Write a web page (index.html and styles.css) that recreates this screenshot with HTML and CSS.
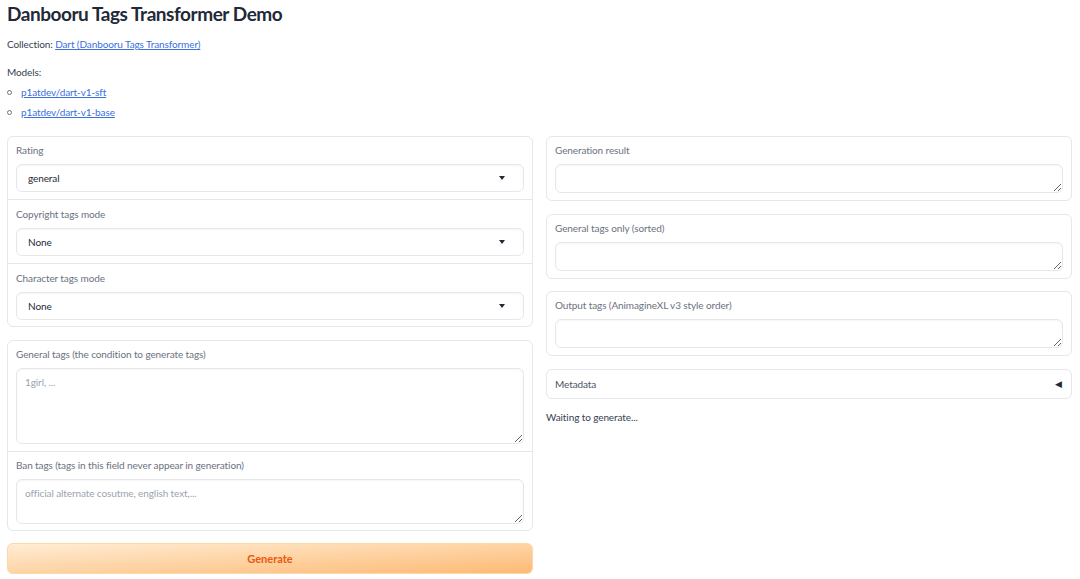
FILE: index.html
```html
<!DOCTYPE html>
<html lang="en">
<head>
<meta charset="UTF-8" />
<meta name="viewport" content="width=device-width, initial-scale=1" />
<title>Danbooru Tags Transformer Demo</title>
<link rel="stylesheet" href="styles.css">
</head>
<body>

<div class="app">
  <h1>Danbooru Tags Transformer Demo</h1>
  <p class="intro">Collection: <a href="#">Dart (Danbooru Tags Transformer)</a></p>
  <p class="intro models">Models:</p>
  <ul class="model-list">
    <li><a href="#">p1atdev/dart-v1-sft</a></li>
    <li><a href="#">p1atdev/dart-v1-base</a></li>
  </ul>

  <div class="row">
    <!-- left: inputs -->
    <div class="col">
      <div class="panel selects">
        <div class="block">
          <label class="field-label">Rating</label>
          <div class="dropdown"><span>general</span><span class="caret"></span></div>
        </div>
        <div class="block">
          <label class="field-label">Copyright tags mode</label>
          <div class="dropdown"><span>None</span><span class="caret"></span></div>
        </div>
        <div class="block">
          <label class="field-label">Character tags mode</label>
          <div class="dropdown"><span>None</span><span class="caret"></span></div>
        </div>
      </div>

      <div class="panel">
        <div class="block">
          <label class="field-label">General tags (the condition to generate tags)</label>
          <textarea class="tall" placeholder="1girl, ..."></textarea>
        </div>
        <div class="block">
          <label class="field-label">Ban tags (tags in this field never appear in generation)</label>
          <textarea class="medium" placeholder="official alternate cosutme, english text,..."></textarea>
        </div>
      </div>

      <button class="generate-btn">Generate</button>
    </div>

    <!-- right: outputs -->
    <div class="col outputs">
      <div class="panel">
        <div class="block">
          <label class="field-label">Generation result</label>
          <textarea class="short"></textarea>
        </div>
      </div>
      <div class="panel">
        <div class="block">
          <label class="field-label">General tags only (sorted)</label>
          <textarea class="short"></textarea>
        </div>
      </div>
      <div class="panel">
        <div class="block">
          <label class="field-label">Output tags (AnimagineXL v3 style order)</label>
          <textarea class="short"></textarea>
        </div>
      </div>
      <div class="panel accordion">
        <span>Metadata</span>
        <span class="accordion-icon">&#9664;</span>
      </div>
      <p class="status">Waiting to generate...</p>
    </div>
  </div>
</div>

</body>
</html>
```

FILE: styles.css
```css
/* Base */
body {
  margin: 0;
  font-family: Lato, 'Noto Sans', sans-serif;
  background: #fff;
  color: #374151;
}
.app {
  padding: 0 8px 0 7px;
}
h1 {
  margin: 0;
  font-size: 19px;
  letter-spacing: -0.45px;
  line-height: 28px;
  font-weight: 700;
  color: #1f2937;
}
.intro {
  margin: 8px 0 0 0;
  font-size: 10px;
  letter-spacing: -0.1px;
  line-height: 16px;
}
.intro.models {
  margin-top: 12px;
}
a {
  color: #3b6fe0;
  text-decoration: underline;
}
.model-list {
  list-style: none;
  margin: 4px 0 0 0;
  padding: 0;
  font-size: 10px;
  letter-spacing: -0.1px;
  line-height: 16px;
}
.model-list li {
  display: flex;
  align-items: center;
  gap: 9px;
  margin-bottom: 4px;
}
.model-list li::before {
  content: "";
  width: 3px;
  height: 3px;
  border: 1px solid #6b7280;
  border-radius: 50%;
}

/* Layout */
.row {
  display: grid;
  grid-template-columns: 1fr 1fr;
  gap: 13px;
  margin-top: 16px;
}
.col {
  display: flex;
  flex-direction: column;
  gap: 13px;
  align-items: stretch;
}
.col.outputs {
  gap: 12.5px;
}
.col > .status {
  margin-top: -1px;
}

/* Panels & blocks */
.panel {
  border: 1px solid #e5e7eb;
  border-radius: 6px;
  background: #fff;
  overflow: hidden;
}
.block {
  padding: 6px 8px 7px;
  display: flex;
  flex-direction: column;
}
.block:last-child {
  padding-bottom: 6px;
}
.outputs .block:last-child {
  padding-bottom: 7px;
}
.block + .block {
  border-top: 1px solid #e5e7eb;
}
.selects .block + .block {
  padding-top: 7px;
}
.field-label {
  font-size: 10px;
  letter-spacing: -0.1px;
  line-height: 14px;
  color: #6b7280;
  margin-bottom: 7px;
}

/* Inputs */
.dropdown {
  display: flex;
  justify-content: space-between;
  align-items: center;
  height: 26px;
  padding: 0 18px 0 11px;
  border: 1px solid #e5e7eb;
  border-radius: 6px;
  box-shadow: inset 0 1px 2px rgba(0,0,0,0.04);
  font-size: 10px;
  letter-spacing: -0.1px;
  color: #1f2937;
}
.caret {
  width: 0;
  height: 0;
  border-left: 3.5px solid transparent;
  border-right: 3.5px solid transparent;
  border-top: 4px solid #1f2937;
}
textarea {
  display: block;
  box-sizing: border-box;
  width: 100%;
  resize: vertical;
  border: 1px solid #e5e7eb;
  border-radius: 6px;
  box-shadow: inset 0 1px 2px rgba(0,0,0,0.04);
  padding: 6px 8px;
  font-family: inherit;
  font-size: 10px;
  letter-spacing: -0.1px;
  line-height: 14px;
  color: #1f2937;
  outline: none;
}
textarea::placeholder {
  color: #9ca3af;
}
textarea.tall { height: 76px; }
textarea.medium { height: 45px; }
textarea.short { height: 29px; }

/* Button */
.generate-btn {
  height: 31px;
  margin-top: -1px;
  border: 1px solid #fed7aa;
  border-radius: 6px;
  background: linear-gradient(to bottom right, #ffedd5, #fdba74);
  color: #ea580c;
  font-family: inherit;
  font-size: 11px;
  font-weight: 700;
  cursor: pointer;
  box-shadow: 0 1px 2px rgba(0,0,0,0.05);
}

/* Accordion */
.accordion {
  display: flex;
  justify-content: space-between;
  align-items: center;
  height: 28px;
  padding: 0 9px 0 8px;
  font-size: 10px;
  letter-spacing: -0.1px;
  color: #4b5563;
}
.accordion-icon {
  font-size: 9px;
  color: #1f2937;
}
.status {
  margin: 0;
  font-size: 10px;
  letter-spacing: -0.1px;
  line-height: 14px;
  color: #374151;
}
```
